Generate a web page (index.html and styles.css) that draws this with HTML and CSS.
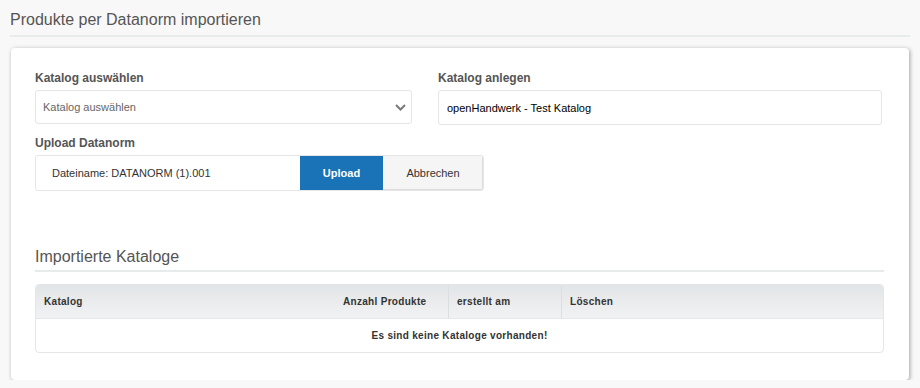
FILE: index.html
```html
<!DOCTYPE html>
<html lang="de">
<head>
  <meta charset="utf-8">
  <link rel="stylesheet" href="styles.css">
  <title>Datanorm Import</title>
</head>
<body>
  <h1 class="page-title">Produkte per Datanorm importieren</h1>

  <div class="card">
    <div class="form-grid">
      <div class="field">
        <label>Katalog auswählen</label>
        <div class="select">
          <span>Katalog auswählen</span>
          <svg width="11" height="7" viewBox="0 0 11 7">
            <polyline points="1,1 5.5,5.5 10,1" fill="none" stroke="#7a7a7a" stroke-width="2"/>
          </svg>
        </div>
      </div>
      <div class="field">
        <label>Katalog anlegen</label>
        <div class="input">openHandwerk - Test Katalog</div>
      </div>
    </div>

    <div class="field">
      <label>Upload Datanorm</label>
      <div class="upload-group">
        <span class="filename">Dateiname: DATANORM (1).001</span>
        <button class="btn btn-primary">Upload</button>
        <button class="btn btn-default">Abbrechen</button>
      </div>
    </div>

    <h2 class="section-title">Importierte Kataloge</h2>

    <table class="catalogs">
      <thead>
        <tr>
          <th class="col-name">Katalog</th>
          <th class="col-count">Anzahl Produkte</th>
          <th class="col-date">erstellt am</th>
          <th class="col-del">Löschen</th>
        </tr>
      </thead>
      <tbody>
        <tr>
          <td colspan="4" class="empty">Es sind keine Kataloge vorhanden!</td>
        </tr>
      </tbody>
    </table>
  </div>
</body>
</html>
```

FILE: styles.css
```css
:root {
  --text: #555;
  --line: #e8ebec;
  --border: #e6e6e6;
  --blue: #1a73b7;
}

body {
  margin: 0;
  padding: 10px 10px 0 10px;
  background: #f8f8f8;
  font-family: "Liberation Sans", Arial, sans-serif;
  color: #333;
}

.page-title {
  margin: 0;
  padding: 0 0 5px 0;
  font-size: 16px;
  line-height: 20px;
  font-weight: normal;
  color: var(--text);
  border-bottom: 2px solid var(--line);
}

.card {
  margin: 11px 1px 0 1px;
  padding: 22px 25px 27px 24px;
  background: #fff;
  border-radius: 4px;
  box-shadow: 1px 1px 4px rgba(0, 0, 0, 0.35);
}

.form-grid {
  display: grid;
  grid-template-columns: 377px 444px;
  column-gap: 26px;
  margin-bottom: 10px;
}

.field label {
  display: block;
  font-size: 12px;
  line-height: 16px;
  font-weight: bold;
  color: var(--text);
  margin-bottom: 4px;
}

.select, .input {
  box-sizing: border-box;
  display: flex;
  align-items: center;
  border: 1px solid var(--border);
  border-radius: 3px;
  font-size: 11px;
}

.select {
  height: 34px;
  padding: 0 5px 0 7px;
  justify-content: space-between;
  color: #666;
}

.input {
  height: 35px;
  padding: 0 8px;
  color: #000;
}

.upload-group {
  display: flex;
  width: 449px;
  height: 36px;
  box-sizing: border-box;
  border: 1px solid var(--border);
  border-radius: 3px;
  overflow: hidden;
}

.filename {
  flex: 1;
  display: flex;
  align-items: center;
  padding-left: 16px;
  font-size: 11px;
  color: #333;
}

.btn {
  border: 0;
  margin: 0;
  font-family: inherit;
  font-size: 11px;
}

.btn-primary {
  width: 83px;
  background: var(--blue);
  color: #fff;
  font-weight: bold;
}

.btn-default {
  width: 100px;
  background: #f5f5f5;
  color: #333;
  box-shadow: inset -1px -1px 0 #ddd;
}

.section-title {
  margin: 56px 0 12px 0;
  padding-bottom: 3px;
  font-size: 16px;
  line-height: 20px;
  font-weight: normal;
  color: var(--text);
  border-bottom: 2px solid var(--line);
}

.catalogs {
  width: 100%;
  border-collapse: separate;
  border-spacing: 0;
  border: 1px solid var(--border);
  border-radius: 4px;
  font-size: 10px;
  letter-spacing: 0.3px;
  color: #333;
}

.catalogs th {
  height: 33px;
  padding: 0 8px;
  text-align: left;
  background: linear-gradient(#e2e5e7, #f1f2f3);
  border-bottom: 1px solid var(--border);
}
.catalogs th:first-child { border-top-left-radius: 3px; }
.catalogs th:last-child { border-top-right-radius: 3px; }

.col-name { width: 283px; }
.col-count { width: 97px; }
.col-date { width: 96px; border-left: 1px solid #dcdfe1; }
.col-del { border-left: 1px solid #dcdfe1; }

.catalogs td.empty {
  height: 33px;
  padding: 0;
  text-align: center;
  font-weight: bold;
}
```
